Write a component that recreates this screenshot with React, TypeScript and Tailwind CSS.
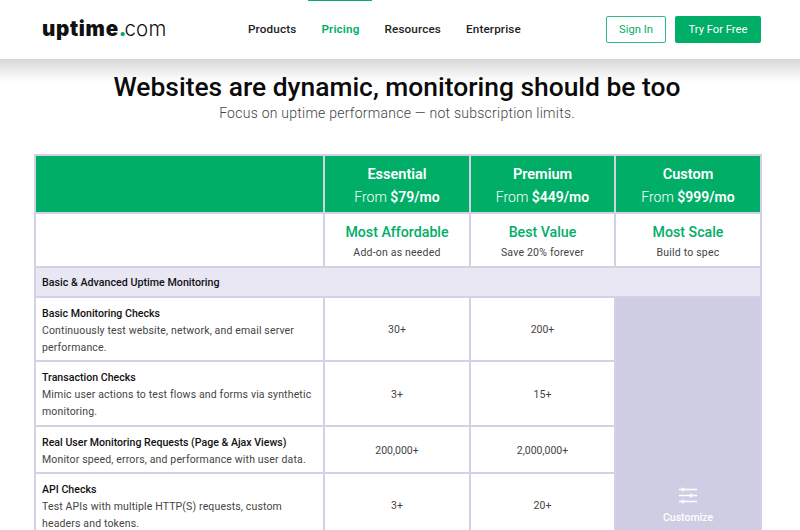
const rows = [
  { title: 'Basic Monitoring Checks', desc: 'Continuously test website, network, and email server performance.', a: '30+', b: '200+', h: 'h-[64px]' },
  { title: 'Transaction Checks', desc: 'Mimic user actions to test flows and forms via synthetic monitoring.', a: '3+', b: '15+', h: 'h-[65px]' },
  { title: 'Real User Monitoring Requests (Page & Ajax Views)', desc: 'Monitor speed, errors, and performance with user data.', a: '200,000+', b: '2,000,000+', h: 'h-[47px]' },
  { title: 'API Checks', desc: 'Test APIs with multiple HTTP(S) requests, custom headers and tokens.', a: '3+', b: '20+', h: 'h-[64px]' },
];

const plans = [
  { name: 'Essential', price: '$79/mo', tag: 'Most Affordable', sub: 'Add-on as needed' },
  { name: 'Premium', price: '$449/mo', tag: 'Best Value', sub: 'Save 20% forever' },
  { name: 'Custom', price: '$999/mo', tag: 'Most Scale', sub: 'Build to spec' },
];

function SlidersIcon() {
  return (
    <svg width="18" height="17" viewBox="0 0 18 17" fill="none" stroke="white" strokeWidth="1.3">
      <path d="M6 2.5H18M0 2.5H3M0 8.5H11M14 8.5H18M6 14.5H18M0 14.5H3" />
      <path d="M3.5 0.5v4M5 1v3M11.5 6.5v4M13 7v3M3.5 12.5v4M5 13v3" />
    </svg>
  );
}

export default function App() {
  return (
    <div className="h-[530px] w-[800px] overflow-hidden bg-white font-['Roboto',sans-serif]">
      <header className="flex h-[59px] items-center bg-white pl-[42px] pr-[39px]">
        <div className="w-[206px] text-[20.5px] leading-none text-[#111] font-['Inter',sans-serif]">
          <span className="font-black tracking-[0.7px]">uptime</span>
          <span className="font-black tracking-[-2px] text-[#00ae68]">.</span>
          <span className="font-light tracking-[0.2px]">com</span>
        </div>
        <nav className="flex h-full items-center gap-[25px] text-[11.7px] font-medium tracking-[0.15px] text-[#222]">
          <a>Products</a>
          <a className="relative flex h-full items-center font-semibold text-[#00ae68]">
            <span className="absolute -left-[13px] -right-[13px] top-0 h-px bg-[#00ae68]" />
            Pricing
          </a>
          <a>Resources</a>
          <a>Enterprise</a>
        </nav>
        <div className="ml-auto flex gap-[9px] text-[11.2px]">
          <button className="h-[27px] w-[60px] rounded-[2px] border border-[#2fb985] pt-[2px] text-[#00ae68]">Sign In</button>
          <button className="h-[27px] w-[86px] rounded-[2px] bg-[#00ae68] pt-[2px] text-white">Try For Free</button>
        </div>
      </header>

      <div className="h-[95px] bg-gradient-to-b from-[#d8d8d8] via-white via-[24%] to-white pr-[6px] text-center">
        <h1 className="pt-[12px] text-[26.4px] font-medium leading-[32px] text-[#0b0b0b]">
          Websites are dynamic, monitoring should be too
        </h1>
        <p className="text-[14px] font-light leading-[20px] tracking-[0.25px] text-[#444]">
          Focus on uptime performance — not subscription limits.
        </p>
      </div>

      <table className="ml-[34px] w-[726px] table-fixed border-collapse border-2 border-[#d3d1e6]">
        <colgroup>
          <col className="w-[289px]" />
          <col className="w-[146px]" />
          <col className="w-[145px]" />
          <col className="w-[146px]" />
        </colgroup>
        <thead>
          <tr className="h-[58px] bg-[#00ae68] text-white">
            <th className="border-2 border-[#d3d1e6]" />
            {plans.map((p) => (
              <th key={p.name} className="border-2 border-[#d3d1e6] pt-[2px] text-center font-normal">
                <div className="text-[14.5px] font-semibold leading-[23px]">{p.name}</div>
                <div className="text-[14px] font-light leading-[22px]">
                  From <span className="font-semibold">{p.price}</span>
                </div>
              </th>
            ))}
          </tr>
        </thead>
        <tbody>
          <tr className="h-[54px]">
            <td className="border-2 border-[#d3d1e6]" />
            {plans.map((p) => (
              <td key={p.tag} className="border-2 border-[#d3d1e6] pt-[2px] text-center">
                <div className="text-[14.2px] font-medium leading-[20px] text-[#00ae68]">{p.tag}</div>
                <div className="mt-[3px] text-[10.5px] leading-[15px] tracking-[0.2px] text-[#444]">{p.sub}</div>
              </td>
            ))}
          </tr>
          <tr className="h-[30px] bg-[#e8e7f3]">
            <td colSpan={4} className="border-2 border-[#d3d1e6] pl-[6px] pt-[2px] text-[10.7px] font-medium text-[#111]">
              Basic &amp; Advanced Uptime Monitoring
            </td>
          </tr>
          {rows.map((r, i) => (
            <tr key={r.title} className={r.h}>
              <td className="border-2 border-[#d3d1e6] pl-[6px] pr-[8px] pt-[2px] align-middle">
                <div className="text-[10.6px] font-medium leading-[17px] text-[#111]">{r.title}</div>
                <div className="text-[10.5px] leading-[17px] tracking-[0.15px] text-[#444]">{r.desc}</div>
              </td>
              <td className="border-2 border-[#d3d1e6] pt-[2px] text-center text-[10.5px] text-[#444]">{r.a}</td>
              <td className="border-2 border-[#d3d1e6] pt-[2px] text-center text-[10.5px] text-[#444]">{r.b}</td>
              {i === 0 && (
                <td rowSpan={4} className="border-2 border-[#d3d1e6] bg-[#cfcde3] align-bottom">
                  <div className="flex flex-col items-center pb-[10px]">
                    <SlidersIcon />
                    <span className="mt-[6px] text-[10.5px] font-medium text-white">Customize</span>
                  </div>
                </td>
              )}
            </tr>
          ))}
        </tbody>
      </table>
    </div>
  );
}
